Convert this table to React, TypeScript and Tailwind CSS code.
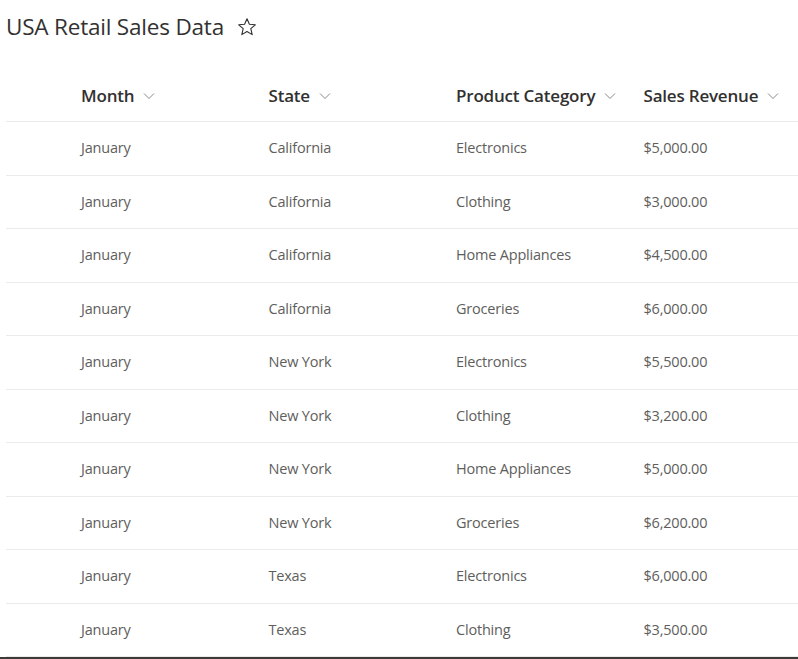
import React from "react";

const rows = [
  ["January", "California", "Electronics", "$5,000.00"],
  ["January", "California", "Clothing", "$3,000.00"],
  ["January", "California", "Home Appliances", "$4,500.00"],
  ["January", "California", "Groceries", "$6,000.00"],
  ["January", "New York", "Electronics", "$5,500.00"],
  ["January", "New York", "Clothing", "$3,200.00"],
  ["January", "New York", "Home Appliances", "$5,000.00"],
  ["January", "New York", "Groceries", "$6,200.00"],
  ["January", "Texas", "Electronics", "$6,000.00"],
  ["January", "Texas", "Clothing", "$3,500.00"],
];

const headers = ["Month", "State", "Product Category", "Sales Revenue"];

function Chevron() {
  return (
    <svg width="12" height="8" viewBox="0 0 12 8" className="ml-[9px] mt-[1px] shrink-0">
      <path d="M1 1.5 L6 6.5 L11 1.5" fill="none" stroke="#8a8886" strokeWidth="1" />
    </svg>
  );
}

function Star() {
  return (
    <svg width="20" height="20" viewBox="0 0 20 20" className="ml-[13px] shrink-0">
      <path
        d="M10 1.8 L12.4 7.3 L18.3 7.8 L13.8 11.7 L15.2 17.6 L10 14.5 L4.8 17.6 L6.2 11.7 L1.7 7.8 L7.6 7.3 Z"
        fill="none"
        stroke="#323130"
        strokeWidth="1.1"
        strokeLinejoin="round"
      />
    </svg>
  );
}

export default function App() {
  return (
    <div
      className="w-[798px] h-[659px] bg-white overflow-hidden relative"
      style={{ fontFamily: '"Open Sans", "Noto Sans", sans-serif' }}
    >
      <div className="flex items-center h-[52px] pl-[6px] pt-[1px]">
        <span className="text-[22.5px] text-[#323130] tracking-[-0.2px]">USA Retail Sales Data</span>
        <Star />
      </div>
      <div className="ml-[6px]">
        <div className="flex h-[70px] items-center border-b border-[#edebe9] pt-[18px]">
          <div className="w-[75px] shrink-0" />
          {headers.map((h) => (
            <div key={h} className="w-[187.5px] shrink-0 flex items-center">
              <span className="text-[17px] font-semibold text-[#323130] tracking-[-0.2px]">{h}</span>
              <Chevron />
            </div>
          ))}
        </div>
        {rows.map((r, i) => (
          <div key={i} className="flex h-[53.5px] items-center border-b border-[#edebe9]">
            <div className="w-[75px] shrink-0" />
            {r.map((c, j) => (
              <div key={j} className="w-[187.5px] shrink-0 text-[14.5px] text-[#605e5c] tracking-[-0.2px]">
                {c}
              </div>
            ))}
          </div>
        ))}
      </div>
      <div className="absolute left-0 right-0 bottom-0 h-[2px] bg-[#3b3a39]" />
    </div>
  );
}
